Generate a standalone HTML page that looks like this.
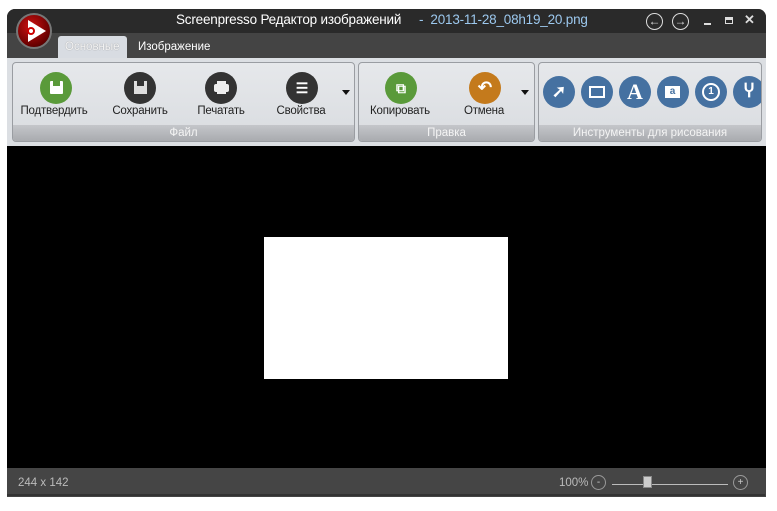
<!DOCTYPE html>
<html><head><meta charset="utf-8"><style>
*{margin:0;padding:0;box-sizing:border-box}
body{width:777px;height:511px;background:#fff;position:relative;overflow:hidden;font-family:"Liberation Sans",sans-serif;font-size:12px}
.win{position:absolute;left:7px;top:9px;width:759px;height:488px;background:#444;border-radius:8px 8px 0 0}
.title{position:absolute;left:7px;top:9px;width:759px;height:24px;background:#2a2a2a;border-radius:8px 8px 0 0}
.t{position:absolute;top:12px;color:#fff;font-size:13.5px;letter-spacing:-0.2px}
.tabs{position:absolute;left:7px;top:33px;width:759px;height:25px;background:#444}
.tab{position:absolute;top:36px;height:23px;line-height:23px;font-size:11.5px;color:#fff;padding:0 7px}
.ribbon{position:absolute;left:7px;top:58px;width:759px;height:88px;background:#dcdfe3}
.grp{position:absolute;top:62px;height:80px;border:1px solid #9a9da2;border-radius:4px;background:linear-gradient(#e6e8eb,#d9dce0);overflow:hidden}
.glab{position:absolute;left:0;right:0;bottom:0;height:16px;background:linear-gradient(#c4c6ca,#a9abaf);color:#f4f4f4;text-align:center;font-size:11.5px;line-height:16px}
.ic{position:absolute;width:32px;height:32px;border-radius:50%;top:72px;color:#fff;text-align:center;line-height:32px;font-weight:bold}
.lbl{position:absolute;top:105px;font-size:11.5px;letter-spacing:-0.2px;color:#222;transform:translateX(-50%);white-space:nowrap}
.tc{position:absolute;width:32px;height:32px;border-radius:50%;top:76px;background:#4571a1;color:#fff;text-align:center;line-height:32px;font-weight:bold}
.canvas{position:absolute;left:7px;top:146px;width:759px;height:322px;background:#000}
.status{position:absolute;left:7px;top:468px;width:758px;height:28px;background:#454545;border-bottom:2px solid #333}
.arr{position:absolute;top:90px;width:0;height:0;border-left:4px solid transparent;border-right:4px solid transparent;border-top:5px solid #111}
</style></head><body>
<div class="win"></div>
<div class="title"></div>
<div class="tabs"></div>
<div style="position:absolute;left:16px;top:13px;width:36px;height:36px;border-radius:50%;background:radial-gradient(circle at 40% 35%,#c11,#600 70%,#111);border:2px solid #777"></div>
<div style="position:absolute;left:28px;top:20px;width:0;height:0;border-top:11px solid transparent;border-bottom:11px solid transparent;border-left:18px solid #fff"></div>
<div style="position:absolute;left:27px;top:27px;width:8px;height:8px;border-radius:50%;border:2px solid #c00"></div>
<div class="t" style="left:176px">Screenpresso Редактор изображений</div>
<div class="t" style="left:419px;color:#9cc8ee">-&nbsp; 2013-11-28_08h19_20.png</div>
<div style="position:absolute;left:646px;top:13px;width:17px;height:17px;border:1.5px solid #ddd;border-radius:50%;color:#ddd;font-size:12px;line-height:14px;text-align:center">←</div>
<div style="position:absolute;left:672px;top:13px;width:17px;height:17px;border:1.5px solid #ddd;border-radius:50%;color:#ddd;font-size:12px;line-height:14px;text-align:center">→</div>
<div style="position:absolute;left:704px;top:23px;width:7px;height:2px;background:#ddd"></div>
<div style="position:absolute;left:725px;top:17px;width:8px;height:7px;border:1.5px solid #ddd;border-top-width:3px"></div>
<div style="position:absolute;left:744px;top:12px;color:#ddd;font-size:13px;font-weight:bold">✕</div>
<div class="tab" style="left:58px;background:#d8dce2;color:#fff;border-radius:3px 3px 0 0;color:#f4f4f4;text-shadow:0 0 1px #888">Основные</div>
<div class="tab" style="left:131px">Изображение</div>
<div class="ribbon"></div>
<div class="grp" style="left:12px;width:343px"><div class="glab">Файл</div></div>
<div class="grp" style="left:358px;width:177px"><div class="glab">Правка</div></div>
<div class="grp" style="left:538px;width:224px"><div class="glab">Инструменты для рисования</div>
<div class="tc" style="left:4px;top:13px;font-size:17px">➚</div>
<div class="tc" style="left:42px;top:13px"><div style="position:absolute;left:8px;top:10px;width:16px;height:12px;border:2px solid #fff"></div></div>
<div class="tc" style="left:80px;top:13px;font-family:'Liberation Serif',serif;font-size:22px">A</div>
<div class="tc" style="left:118px;top:13px"><div style="position:absolute;left:8px;top:10px;width:15px;height:12px;background:#fff;color:#4571a1;font-size:10px;line-height:12px">a</div></div>
<div class="tc" style="left:156px;top:13px"><div style="position:absolute;left:7px;top:7px;width:18px;height:18px;border:2px solid #fff;border-radius:50%;font-size:10px;line-height:14px">1</div></div>
<div class="tc" style="left:194px;top:13px;font-size:17px">Ⴤ</div>
</div>
<div class="ic" style="left:40px;background:#5a9a3a"><div style="position:absolute;left:10px;top:9px;width:13px;height:13px;background:#fff;border-radius:1px"></div><div style="position:absolute;left:13px;top:9px;width:7px;height:5px;background:#5a9a3a"></div></div>
<div class="ic" style="left:124px;background:#333"><div style="position:absolute;left:10px;top:9px;width:13px;height:13px;background:#ddd"></div><div style="position:absolute;left:13px;top:9px;width:7px;height:5px;background:#333"></div></div>
<div class="ic" style="left:205px;background:#333"><div style="position:absolute;left:9px;top:12px;width:15px;height:8px;background:#eee;border-radius:2px"></div><div style="position:absolute;left:12px;top:9px;width:9px;height:3px;background:#eee"></div><div style="position:absolute;left:12px;top:18px;width:9px;height:4px;background:#eee"></div></div>
<div class="ic" style="left:286px;background:#333;font-size:14px">☰</div>
<div class="lbl" style="left:54px">Подтвердить</div>
<div class="lbl" style="left:140px">Сохранить</div>
<div class="lbl" style="left:221px">Печатать</div>
<div class="lbl" style="left:301px">Свойства</div>
<div class="arr" style="left:342px"></div>
<div class="ic" style="left:385px;background:#5a9a3a;font-size:14px">⧉</div>
<div class="ic" style="left:469px;background:#c47a1c;font-size:17px">↶</div>
<div class="lbl" style="left:400px">Копировать</div>
<div class="lbl" style="left:484px">Отмена</div>
<div class="arr" style="left:521px"></div>
<div class="canvas"></div>
<div style="position:absolute;left:264px;top:237px;width:244px;height:142px;background:#fff"></div>
<div class="status"></div>
<div style="position:absolute;left:18px;top:477px;color:#bbb;font-size:11.5px">244 x 142</div>
<div style="position:absolute;left:559px;top:477px;color:#bbb;font-size:11.5px">100%</div>
<div style="position:absolute;left:591px;top:475px;width:15px;height:15px;border:1px solid #999;border-radius:50%;color:#ccc;font-size:10px;line-height:13px;text-align:center">-</div>
<div style="position:absolute;left:733px;top:475px;width:15px;height:15px;border:1px solid #999;border-radius:50%;color:#ccc;font-size:10px;line-height:13px;text-align:center">+</div>
<div style="position:absolute;left:612px;top:484px;width:116px;height:1px;background:#bbb"></div>
<div style="position:absolute;left:643px;top:476px;width:9px;height:12px;background:#ccc;border:1px solid #888"></div>
</body></html>
